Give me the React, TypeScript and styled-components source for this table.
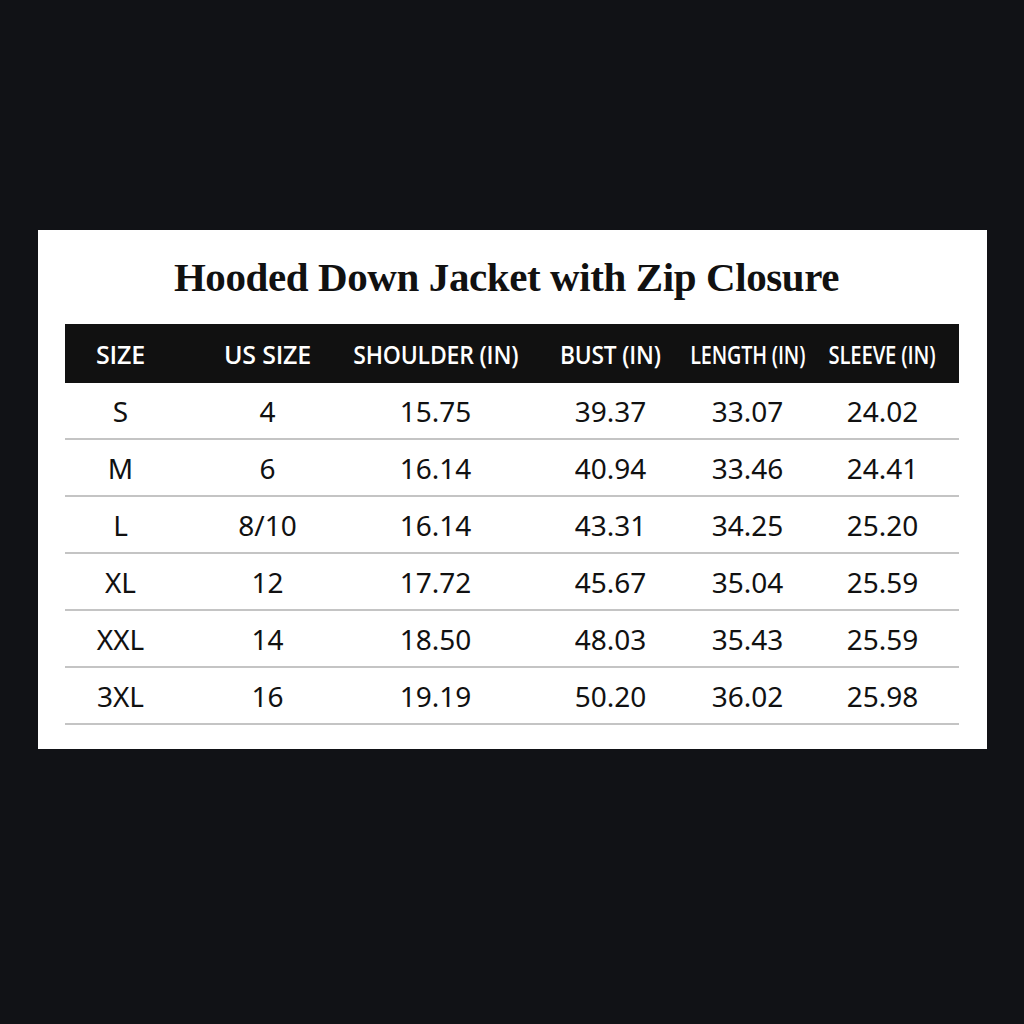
import styled, { createGlobalStyle } from "styled-components"

const GlobalStyle = createGlobalStyle`
  html, body {
    margin: 0;
    padding: 0;
    background: #111216;
  }
`

// label plus horizontal squeeze, the narrow headers in the picture are condensed
const headers: [string, number][] = [
    ["SIZE", 1],
    ["US SIZE", 1],
    ["SHOULDER (IN)", 0.92],
    ["BUST (IN)", 0.91],
    ["LENGTH (IN)", 0.79],
    ["SLEEVE (IN)", 0.81],
]

const rows = [
    ["S", "4", "15.75", "39.37", "33.07", "24.02"],
    ["M", "6", "16.14", "40.94", "33.46", "24.41"],
    ["L", "8/10", "16.14", "43.31", "34.25", "25.20"],
    ["XL", "12", "17.72", "45.67", "35.04", "25.59"],
    ["XXL", "14", "18.50", "48.03", "35.43", "25.59"],
    ["3XL", "16", "19.19", "50.20", "36.02", "25.98"],
]

const App = () => {
    return (
        <Page>
            <GlobalStyle />
            <Card>
                <Title>Hooded Down Jacket with Zip Closure</Title>
                <HeaderBar>
                    {headers.map(([label, squeeze], i) => (
                        <HeadCell key={label} $last={i === headers.length - 1}>
                            <HeadLabel style={{ transform: `scaleX(${squeeze})` }}>{label}</HeadLabel>
                        </HeadCell>
                    ))}
                </HeaderBar>
                {rows.map((row) => (
                    <Row key={row[0]}>
                        {row.map((value, i) => (
                            <Cell key={i} $last={i === row.length - 1}>{value}</Cell>
                        ))}
                    </Row>
                ))}
            </Card>
        </Page>
    )
}

export default App

const Page = styled.div`
  min-height: 1024px;
  box-sizing: border-box;
  padding-top: 230px;
  display: flex;
  justify-content: center;
  align-items: flex-start;
`

const Card = styled.div`
  width: 949px;
  box-sizing: border-box;
  background: #ffffff;
  padding: 0 28px 24px 27px;
`

const Title = styled.h1`
  margin: 0;
  height: 94px;
  display: flex;
  align-items: center;
  justify-content: center;
  padding-right: 10px;
  font-family: "Liberation Serif", "Times New Roman", serif;
  font-weight: 700;
  font-size: 41px;
  letter-spacing: -0.4px;
  color: #111;
`

const columns = "112px 182px 154px 196px 78px 172px"

const HeaderBar = styled.div`
  display: grid;
  grid-template-columns: ${columns};
  height: 59px;
  align-items: center;
  background: #111111;
`

const HeadCell = styled.div<{ $last?: boolean }>`
  display: flex;
  justify-content: center;
  white-space: nowrap;
  padding-left: ${(p) => (p.$last ? "20px" : "0")};
`

const HeadLabel = styled.span`
  display: inline-block;
  font-family: "Open Sans", "Noto Sans", sans-serif;
  font-weight: 600;
  font-size: 25px;
  letter-spacing: -0.2px;
  color: #ffffff;
`

const Row = styled.div`
  display: grid;
  grid-template-columns: ${columns};
  height: 55px;
  align-items: center;
  border-bottom: 2px solid #c4c4c4;
`

const Cell = styled.div<{ $last?: boolean }>`
  text-align: center;
  white-space: nowrap;
  padding-left: ${(p) => (p.$last ? "20px" : "0")};
  font-family: "Noto Sans", "Open Sans", sans-serif;
  font-size: 28px;
  color: #111;
`
